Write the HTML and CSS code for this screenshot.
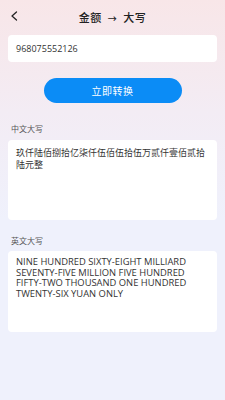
FILE: index.html
```html
<!DOCTYPE html>
<html lang="zh">
<head>
    <meta charset="UTF-8">
    <meta name="viewport" content="width=device-width, initial-scale=1.0">
    <title>金额转大写</title>
    <link rel="stylesheet" href="styles.css">
</head>
<body>
    <div class="page">
        <div class="header">
            <span class="back">
                <svg width="9" height="10" viewBox="0 0 9 10">
                    <path d="M6.5 1 L2 5 L6.5 9" fill="none" stroke="#222" stroke-width="1.3" stroke-linecap="round" stroke-linejoin="round"/>
                </svg>
            </span>
            <div class="title">金额 <span class="arrow">→</span> 大写</div>
        </div>

        <div class="card input-card">968075552126</div>

        <div class="btn-row">
            <button class="convert-btn">立即转换</button>
        </div>

        <div class="label">中文大写</div>
        <div class="card result-card cn">玖仟陆佰捌拾亿柒仟伍佰伍拾伍万贰仟壹佰贰拾陆元整</div>

        <div class="label label-en">英文大写</div>
        <div class="card result-card en">NINE HUNDRED SIXTY-EIGHT MILLIARD SEVENTY-FIVE MILLION FIVE HUNDRED FIFTY-TWO THOUSAND ONE HUNDRED TWENTY-SIX YUAN ONLY</div>
    </div>
</body>
</html>
```

FILE: styles.css
```css
html,
body {
    margin: 0;
    height: 100%;
}

body {
    font-family: "Noto Sans CJK SC", "Noto Sans", sans-serif;
    background: linear-gradient(180deg, #f8e6e8 0%, #f3ecf4 28%, #eff1fc 55%, #eff1fc 100%);
    color: #222;
}

.page {
    padding: 0 8px;
}

.header {
    position: relative;
    height: 33px;
    display: flex;
    align-items: center;
    justify-content: center;
}

.back {
    position: absolute;
    left: 2px;
    top: 11px;
    display: flex;
}

.title {
    font-size: 11px;
    font-weight: 500;
    letter-spacing: 0.5px;
}

.arrow {
    margin: 0 3px;
    font-size: 9px;
}

.card {
    background: #fff;
    border-radius: 4px;
}

.input-card {
    height: 27px;
    margin-top: 2px;
    padding: 0 8px;
    display: flex;
    align-items: center;
    font-family: "Open Sans", sans-serif;
    font-size: 9px;
    color: #333;
}

.btn-row {
    display: flex;
    justify-content: center;
    margin-top: 16px;
}

.convert-btn {
    width: 138px;
    height: 25px;
    border: none;
    border-radius: 13px;
    background: #0b8cf6;
    color: #fff;
    font-family: inherit;
    font-size: 10px;
    letter-spacing: 0.5px;
}

.label {
    font-size: 8px;
    color: #555;
    margin: 20px 0 0 3px;
    height: 13px;
}

.label-en {
    margin-top: 15px;
}

.result-card {
    height: 80px;
    margin-top: 4px;
    padding: 7px 8px;
    box-sizing: border-box;
}

.cn {
    font-size: 9px;
    line-height: 12px;
    color: #333;
}

.en {
    height: 81px;
    margin-top: 3px;
    padding-top: 6px;
    font-family: "Open Sans", sans-serif;
    font-size: 9.4px;
    line-height: 10.7px;
    color: #333;
}
```
